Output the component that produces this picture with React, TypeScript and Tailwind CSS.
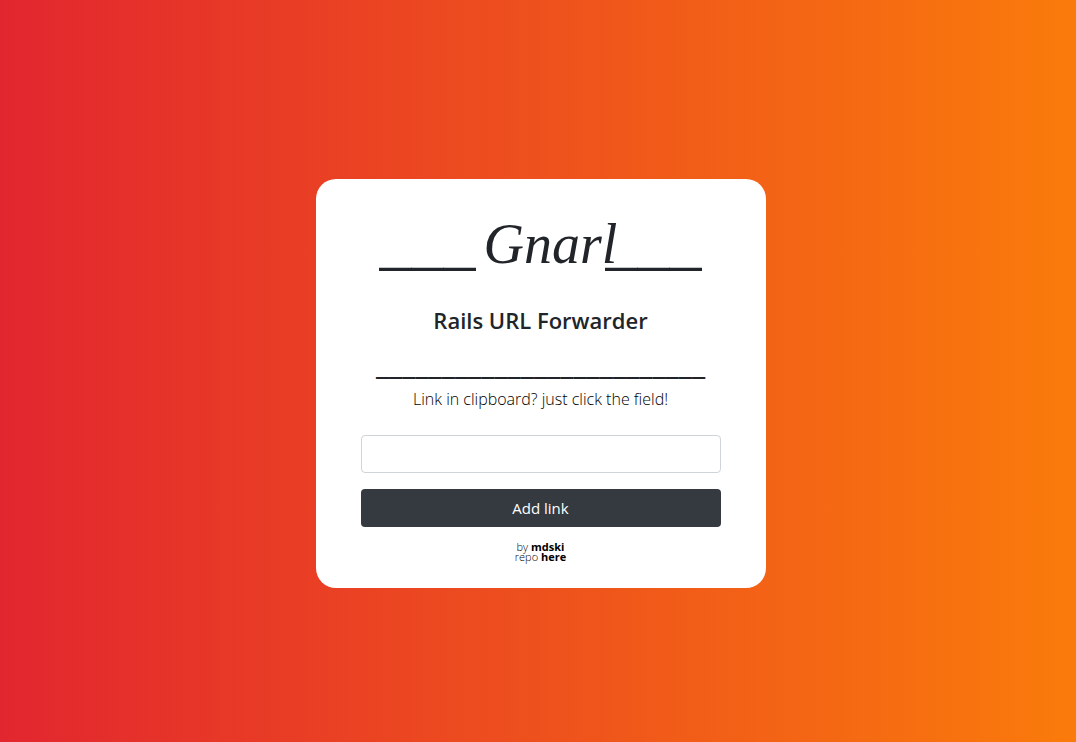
export default function App() {
  return (
    <main className="flex min-h-screen items-center justify-center bg-linear-to-r/srgb from-[#e2262f] to-[#fa7b0b] pt-[25px] pl-[5px] font-['Open_Sans','Noto_Sans',sans-serif] text-[#212529]">
      <section className="w-full max-w-[450px] rounded-[20px] bg-white px-[45px] pt-[27px] pb-[26px] text-center">
        <h1 className="flex h-20 items-baseline justify-center whitespace-nowrap font-['Liberation_Serif',serif] text-[64px] leading-[72px]">
          <span>___</span>
          <span className="-mr-3 pl-2 text-[56px] italic">Gnarl</span>
          <span>___</span>
        </h1>
        <h2 className="mt-4 text-[22px] leading-9 font-semibold">Rails URL Forwarder</h2>
        <div className="mt-4 flex h-[33px] justify-center whitespace-nowrap text-[31px] leading-4 font-semibold">
          <span>_________________________</span>
        </div>
        <label htmlFor="link" className="block text-[16px] leading-6 font-light text-black">
          Link in clipboard? just click the field!
        </label>
        <form onSubmit={(event) => event.preventDefault()} className="mt-6 flex flex-col gap-4">
          <input
            id="link"
            type="text"
            className="h-[38px] w-full rounded-sm border border-[#ced4da] bg-white px-3 outline-none"
          />
          <button type="submit" className="h-[38px] w-full rounded-sm bg-[#343a40] text-[15px] text-white">
            Add link
          </button>
        </form>
        <footer className="mt-[15px] text-[11px] leading-[10px] text-black">
          <p className="font-light">
            by <a href="#mdski" className="font-bold">mdski</a>
          </p>
          <p className="font-light">
            repo <a href="#repo" className="font-bold">here</a>
          </p>
        </footer>
      </section>
    </main>
  );
}
